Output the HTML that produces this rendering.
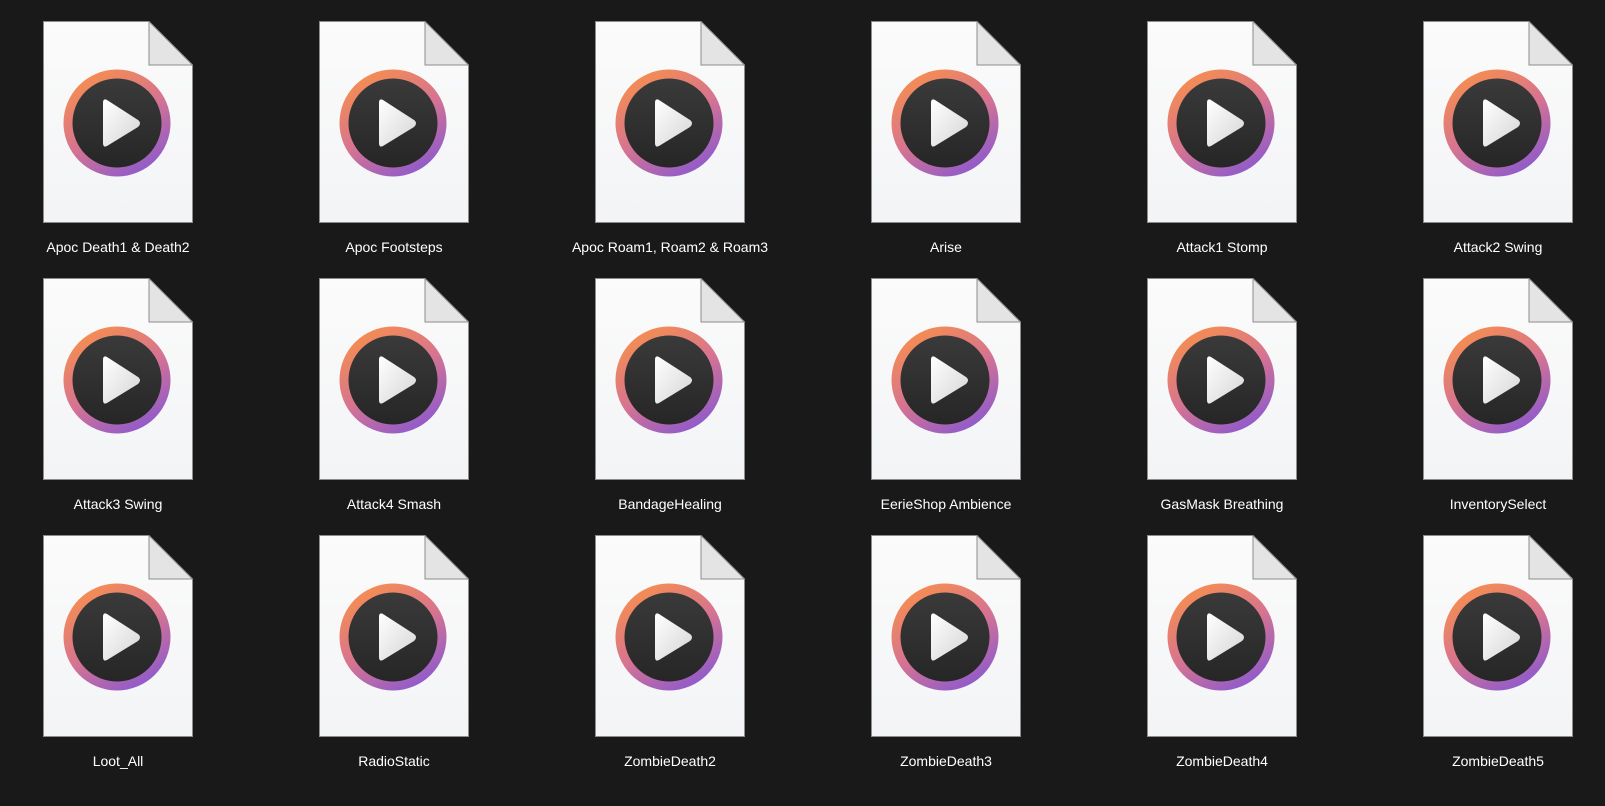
<!DOCTYPE html>
<html><head><meta charset="utf-8"><style>
html,body{margin:0;padding:0;background:#191919;width:1605px;height:806px;overflow:hidden}
.it{position:absolute;width:276px}
.it svg{position:absolute;left:0;top:0}
.lb{position:absolute;top:218px;left:-63px;width:276px;text-align:center;color:#fff;font:14px "Liberation Sans",sans-serif;white-space:nowrap}
</style></head><body>
<svg width="0" height="0" style="position:absolute">
<defs>
<linearGradient id="rg" x1="0.2" y1="0" x2="0.8" y2="1"><stop offset="0" stop-color="#f8904a"/><stop offset="0.5" stop-color="#d77490"/><stop offset="1" stop-color="#8758d2"/></linearGradient>
<linearGradient id="dg" x1="0" y1="0" x2="0" y2="1"><stop offset="0" stop-color="#3a3a3a"/><stop offset="1" stop-color="#262626"/></linearGradient>
<linearGradient id="tg" x1="0" y1="0" x2="1" y2="1"><stop offset="0" stop-color="#ffffff"/><stop offset="1" stop-color="#d5d5d5"/></linearGradient>
<linearGradient id="pg" x1="0" y1="0" x2="0" y2="1"><stop offset="0" stop-color="#fbfbfb"/><stop offset="1" stop-color="#f3f4f6"/></linearGradient>
<symbol id="ic" viewBox="0 0 150 202">
<path d="M0.5,0.5H106L149.5,44V201.5H0.5Z" fill="url(#pg)" stroke="#8c8c8c"/>
<path d="M106,0.5V44H149.5Z" fill="#e4e4e4" stroke="#8c8c8c"/>
<circle cx="74" cy="102" r="53.5" fill="url(#rg)"/>
<circle cx="74" cy="102" r="44.5" fill="url(#dg)"/>
<path d="M64,79Q60,77 60,82V122Q60,127 64,125L95,106Q99,102 95,99Z" fill="url(#tg)"/>
</symbol>
</defs></svg>
<div id="g"></div>
<script>
var n=["Apoc Death1 &amp; Death2","Apoc Footsteps","Apoc Roam1, Roam2 &amp; Roam3","Arise","Attack1 Stomp","Attack2 Swing","Attack3 Swing","Attack4 Smash","BandageHealing","EerieShop Ambience","GasMask Breathing","InventorySelect","Loot_All","RadioStatic","ZombieDeath2","ZombieDeath3","ZombieDeath4","ZombieDeath5"];
var h="";
for(var i=0;i<18;i++){var c=i%6,r=Math.floor(i/6);
h+='<div class="it" style="left:'+(43+c*276)+'px;top:'+(21+r*257)+'px"><svg width="150" height="202"><use href="#ic"/></svg><div class="lb">'+n[i]+'</div></div>';}
document.getElementById("g").innerHTML=h;
</script>
</body></html>
